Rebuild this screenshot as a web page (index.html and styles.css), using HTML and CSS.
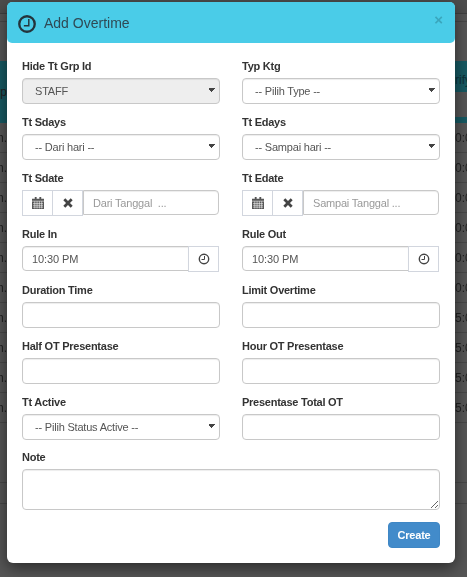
FILE: index.html
```html
<!DOCTYPE html>
<html lang="id">
<head>
    <meta charset="UTF-8">
    <meta name="viewport" content="width=device-width, initial-scale=1.0">
    <title>Add Overtime</title>
    <link rel="stylesheet" href="styles.css">
</head>
<body>
    <!-- tabel di belakang modal -->
    <div class="backdrop">
        <div class="bg-top"></div>
        <div class="bg-head"><span>Typ</span><span>rify</span></div>
        <div class="bg-row"><span>m.</span><span>0:0</span></div>
        <div class="bg-row"><span>m.</span><span>0:0</span></div>
        <div class="bg-row"><span>m.</span><span>0:0</span></div>
        <div class="bg-row"><span>m.</span><span>0:0</span></div>
        <div class="bg-row"><span>m.</span><span>0:0</span></div>
        <div class="bg-row"><span>m.</span><span>0:0</span></div>
        <div class="bg-row"><span>m.</span><span>5:0</span></div>
        <div class="bg-row"><span>m.</span><span>5:0</span></div>
        <div class="bg-row"><span>m.</span><span>5:0</span></div>
        <div class="bg-row"><span>m.</span><span>5:0</span></div>
        <div class="bg-gap"></div>
        <div class="bg-foot"></div>
    </div>

    <div class="modal">
        <div class="modal-header">
            <svg class="icon-title" viewBox="0 0 20 20">
                <circle cx="10" cy="10" r="8.6" fill="none" stroke="#24343c" stroke-width="2.6"/>
                <path d="M12 4.500V12H6.500" fill="none" stroke="#24343c" stroke-width="1.600"/>
            </svg>
            <h4 class="modal-title">Add Overtime</h4>
            <span class="close">&times;</span>
        </div>
        <form class="modal-body">
            <div class="form-grid">
                <div class="form-group">
                    <label>Hide Tt Grp Id</label>
                    <select class="form-control" disabled><option>STAFF</option></select>
                </div>
                <div class="form-group">
                    <label>Typ Ktg</label>
                    <select class="form-control"><option>-- Pilih Type --</option></select>
                </div>
                <div class="form-group">
                    <label>Tt Sdays</label>
                    <select class="form-control"><option>-- Dari hari --</option></select>
                </div>
                <div class="form-group">
                    <label>Tt Edays</label>
                    <select class="form-control"><option>-- Sampai hari --</option></select>
                </div>
                <div class="form-group">
                    <label>Tt Sdate</label>
                    <div class="input-group">
                        <span class="addon"><svg class="icon" viewBox="0 0 13 13"><path fill="#555" d="M0 2h13v11H0zM3 0h2v3H3zM8 0h2v3H8z"/><path stroke="#fff" stroke-width=".6" d="M0 4.500h13M1 7h11M1 9h11M1 11h11M3 4.500v8M5.500 4.500v8M8 4.500v8M10.500 4.500v8"/></svg></span>
                        <span class="addon"><svg class="icon" viewBox="0 0 13 13"><path stroke="#444" stroke-width="3" d="M2.500 2.500l8 8M10.500 2.500l-8 8"/></svg></span>
                        <input class="form-control date-input" type="text" placeholder="Dari Tanggal &nbsp;...">
                    </div>
                </div>
                <div class="form-group">
                    <label>Tt Edate</label>
                    <div class="input-group">
                        <span class="addon"><svg class="icon" viewBox="0 0 13 13"><path fill="#555" d="M0 2h13v11H0zM3 0h2v3H3zM8 0h2v3H8z"/><path stroke="#fff" stroke-width=".6" d="M0 4.500h13M1 7h11M1 9h11M1 11h11M3 4.500v8M5.500 4.500v8M8 4.500v8M10.500 4.500v8"/></svg></span>
                        <span class="addon"><svg class="icon" viewBox="0 0 13 13"><path stroke="#444" stroke-width="3" d="M2.500 2.500l8 8M10.500 2.500l-8 8"/></svg></span>
                        <input class="form-control date-input" type="text" placeholder="Sampai Tanggal ...">
                    </div>
                </div>
                <div class="form-group">
                    <label>Rule In</label>
                    <div class="input-group">
                        <input class="form-control time-input" type="text" value="10:30 PM">
                        <span class="addon"><svg class="icon" viewBox="0 0 12 12"><circle cx="6" cy="6" r="4.700" fill="none" stroke="#444" stroke-width="1.400"/><path d="M6.500 3v3.500H3.500" fill="none" stroke="#444"/></svg></span>
                    </div>
                </div>
                <div class="form-group">
                    <label>Rule Out</label>
                    <div class="input-group">
                        <input class="form-control time-input" type="text" value="10:30 PM">
                        <span class="addon"><svg class="icon" viewBox="0 0 12 12"><circle cx="6" cy="6" r="4.700" fill="none" stroke="#444" stroke-width="1.400"/><path d="M6.500 3v3.500H3.500" fill="none" stroke="#444"/></svg></span>
                    </div>
                </div>
                <div class="form-group">
                    <label>Duration Time</label>
                    <input class="form-control" type="text">
                </div>
                <div class="form-group">
                    <label>Limit Overtime</label>
                    <input class="form-control" type="text">
                </div>
                <div class="form-group">
                    <label>Half OT Presentase</label>
                    <input class="form-control" type="text">
                </div>
                <div class="form-group">
                    <label>Hour OT Presentase</label>
                    <input class="form-control" type="text">
                </div>
                <div class="form-group">
                    <label>Tt Active</label>
                    <select class="form-control"><option>-- Pilih Status Active --</option></select>
                </div>
                <div class="form-group">
                    <label>Presentase Total OT</label>
                    <input class="form-control" type="text">
                </div>
            </div>
            <div class="note-group">
                <label>Note</label>
                <textarea class="form-control note"></textarea>
            </div>
            <div class="actions">
                <button class="btn" type="button">Create</button>
            </div>
        </form>
    </div>
</body>
</html>
```

FILE: styles.css
```css
* {
    box-sizing: border-box;
}
html, body {
    margin: 0;
    height: 100%;
}
body {
    font-family: "Liberation Sans", Arial, sans-serif;
    font-size: 12px;
    color: #333;
    background-color: #565656;
    overflow: hidden;
}

/* tabel redup di belakang */
.backdrop {
    position: fixed;
    inset: 0;
    display: flex;
    flex-direction: column;
    font-size: 12px;
    color: #222;
}
.bg-top {
    height: 61px;
    background: linear-gradient(#4d4d4d 0 13px, #3f3f3f 13px 14px, #555 14px 21px, #474747 21px 22px, #565656 22px);
}
.bg-head {
    height: 62px;
    display: flex;
    justify-content: space-between;
    align-items: center;
    background: linear-gradient(90deg, #175962 0 7px, transparent 7px 455px, #175962 455px),
                #565656;
}
.bg-head span, .bg-row span {
    overflow: hidden;
    display: flex;
}
.bg-head span:first-child, .bg-row span:first-child {
    width: 7px;
    justify-content: flex-end;
}
.bg-head span:last-child, .bg-row span:last-child {
    width: 12px;
}
.bg-head span:last-child {
    height: 62px;
    align-items: center;
    padding-bottom: 25px;
    background: linear-gradient(#175962 0 31px, #565656 31px 56px, #175962 56px);
    color: #0d3038;
}
.bg-row {
    height: 30px;
    display: flex;
    justify-content: space-between;
    align-items: center;
    border-bottom: 1px solid #474747;
}
.bg-gap {
    height: 59px;
}
.bg-foot {
    height: 22px;
    border-top: 1px solid #474747;
    border-bottom: 1px solid #474747;
}

/* modal */
.modal {
    position: fixed;
    top: 2px;
    left: 7px;
    width: 448px;
    height: 561px;
    background-color: #fff;
    border-radius: 6px;
    box-shadow: 0 5px 15px rgba(0, 0, 0, .5);
}
.modal-header {
    height: 41px;
    padding: 0 12px 0 11px;
    display: flex;
    align-items: center;
    gap: 8px;
    background-color: #4acce8;
    border-radius: 5px;
}
.icon-title {
    width: 18px;
    height: 18px;
    margin-top: 3px;
}
.modal-title {
    flex: 1;
    margin: 0;
    font-size: 14px;
    font-weight: normal;
    color: #2f4a55;
}
.close {
    margin-top: -7px;
    font-size: 15px;
    font-weight: bold;
    color: #3aa6bd;
}
.modal-body {
    padding: 15px 15px 0;
}
.form-grid {
    display: grid;
    grid-template-columns: 198px 198px;
    column-gap: 22px;
}
.form-group {
    height: 56px;
}
label {
    display: block;
    height: 20px;
    line-height: 16px;
    font-size: 11px;
    font-weight: bold;
    letter-spacing: -.25px;
    color: #333;
}
.form-control {
    display: block;
    width: 100%;
    height: 26px;
    padding: 3px 12px;
    font-family: inherit;
    font-size: 11px;
    letter-spacing: -.2px;
    color: #555;
    background-color: #fff;
    border: 1px solid #c8c8c8;
    border-radius: 4px;
    box-shadow: inset 0 1px 1px rgba(0, 0, 0, .075);
}
select.form-control {
    appearance: none;
    /* panah kecil digambar dengan dua gradient */
    background-image: linear-gradient(45deg, transparent 50%, #444 50%),
                      linear-gradient(-45deg, transparent 50%, #444 50%);
    background-size: 3px 5px;
    background-position: 186px 9px, 189px 9px;
    background-repeat: no-repeat;
}
select.form-control[disabled] {
    background-color: #eee;
    opacity: 1;
}
.form-control::placeholder {
    color: #999;
}
.input-group {
    display: flex;
    width: 197px;
    height: 26px;
}
.addon {
    width: 31px;
    flex: none;
    display: flex;
    align-items: center;
    justify-content: center;
    background-color: #fff;
    border: 1px solid #d2d6de;
    margin-right: -1px;
}
.icon {
    width: 12px;
    height: 12px;
    margin-top: -1px;
}
.date-input {
    flex: 1;
    min-width: 0;
    width: auto;
    height: 25px;
    padding-left: 9px;
    margin-left: 1px;
    border-radius: 0 4px 4px 0;
}
.time-input {
    flex: 1;
    width: auto;
    min-width: 0;
    height: 25px;
    padding-left: 9px;
    letter-spacing: -.1px;
    border-radius: 4px 0 0 4px;
}
.time-input + .addon {
    margin-right: 0;
    margin-left: -1px;
}
.note-group {
    height: 71px;
    margin-top: -1px;
}
.note {
    height: 41px;
    padding: 6px 12px;
    resize: vertical;
}
.actions {
    display: flex;
    justify-content: flex-end;
    padding-top: 2px;
}
.btn {
    width: 52px;
    height: 26px;
    padding: 0;
    font-family: inherit;
    font-size: 11px;
    font-weight: bold;
    letter-spacing: -.2px;
    color: #fff;
    background-color: #428bca;
    border: 1px solid #3f87c5;
    border-radius: 4px;
}
```
